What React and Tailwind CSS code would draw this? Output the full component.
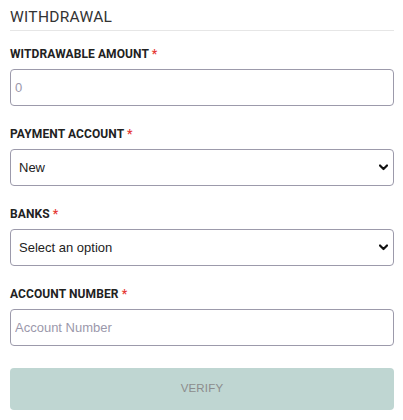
import React from 'react'

const Label = ({ children }) => (
  <label className="block text-[12px] leading-4 font-bold text-[#222] tracking-[0.1px] mb-[7px]" style={{ fontFamily: 'Roboto, sans-serif' }}>
    {children} <span className="text-[#e53935]">*</span>
  </label>
)

const Select = ({ children }) => (
  <div className="relative">
    <select
      className="block w-full h-[37px] appearance-none rounded-[4px] border border-[#9c9aab] pl-[8px] pr-[20px] text-[13px] text-[#222] bg-white outline-none"
      style={{ fontFamily: '"Liberation Sans", Arial, sans-serif' }}
    >
      {children}
    </select>
    <svg className="pointer-events-none absolute right-[6px] top-[15px] w-[9px] h-[7px]" viewBox="0 0 9 7" fill="none">
      <path d="M1 1.5 L4.5 5 L8 1.5" stroke="#111" strokeWidth="2.2" strokeLinecap="round" strokeLinejoin="round" />
    </svg>
  </div>
)

const App = () => {
  return (
    <div className="bg-white min-h-screen pl-[10px] pr-[9px]" style={{ fontFamily: 'Roboto, sans-serif' }}>
      {/* Header */}
      <h1 className="pt-[7px] text-[15.5px] leading-5 font-normal text-[#333] tracking-[0.3px]">WITHDRAWAL</h1>
      <div className="mt-[3px] h-px bg-[#e6e6e6]" />

      <form className="pt-[15px]" onSubmit={(e) => e.preventDefault()}>
        <div>
          <Label>WITDRAWABLE AMOUNT</Label>
          <input
            type="text"
            defaultValue="0"
            className="block w-full h-[37px] rounded-[4px] border border-[#9c9aab] px-[4px] text-[13px] text-[#9b98ab] outline-none"
            style={{ fontFamily: '"Liberation Sans", Arial, sans-serif' }}
          />
        </div>

        <div className="mt-[20px]">
          <Label>PAYMENT ACCOUNT</Label>
          <Select>
            <option>New</option>
          </Select>
        </div>

        <div className="mt-[20px]">
          <Label>BANKS</Label>
          <Select>
            <option>Select an option</option>
          </Select>
        </div>

        <div className="mt-[20px]">
          <Label>ACCOUNT NUMBER</Label>
          <input
            type="text"
            placeholder="Account Number"
            className="block w-full h-[37px] rounded-[4px] border border-[#9c9aab] px-[4px] text-[13px] text-[#222] placeholder:text-[#9b98ab] outline-none"
            style={{ fontFamily: '"Liberation Sans", Arial, sans-serif' }}
          />
        </div>

        <button
          type="submit"
          disabled
          className="mt-[22px] block w-full h-[42px] rounded-[4px] bg-[#bfd6d2] text-[11.5px] text-[#8c8c8c] tracking-[0.2px]"
          style={{ fontFamily: '"Liberation Sans", Arial, sans-serif' }}
        >
          VERIFY
        </button>
      </form>
    </div>
  )
}

export default App
